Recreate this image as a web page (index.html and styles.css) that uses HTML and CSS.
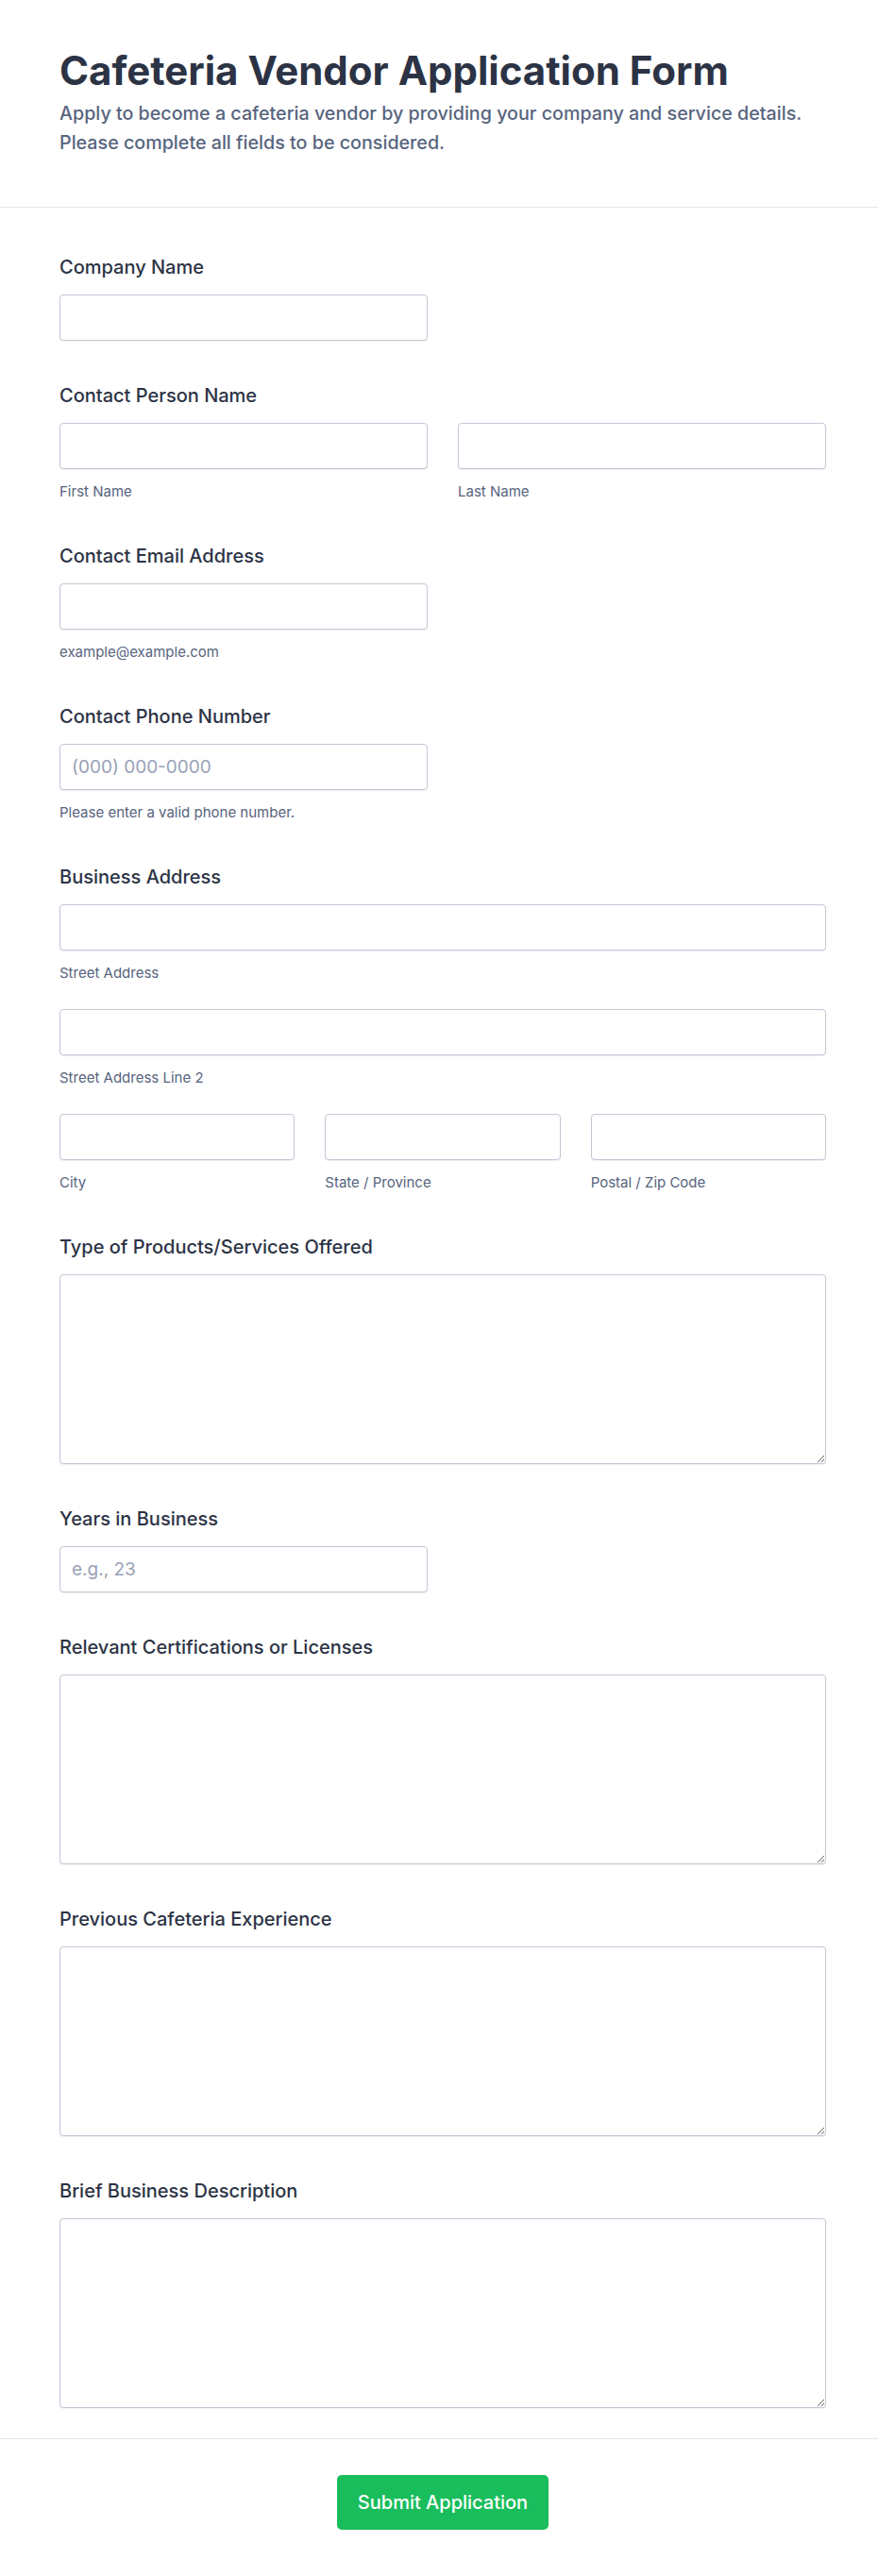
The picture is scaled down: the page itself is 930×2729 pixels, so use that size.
FILE: index.html
```html
<!DOCTYPE html>
<html lang="en">
<head>
<meta charset="utf-8">
<title>Cafeteria Vendor Application Form</title>
<link rel="stylesheet" href="styles.css">
</head>
<body>
<header class="form-header">
  <h1 class="form-title">Cafeteria Vendor Application Form</h1>
  <p class="form-subtitle">Apply to become a cafeteria vendor by providing your company and service details. Please complete all fields to be considered.</p>
</header>

<main class="form-body">
  <div class="field">
    <label class="field-label">Company Name</label>
    <input class="input input-half" type="text">
  </div>

  <div class="field">
    <label class="field-label">Contact Person Name</label>
    <div class="grid-2">
      <div class="sub-field">
        <input class="input" type="text">
        <span class="sublabel">First Name</span>
      </div>
      <div class="sub-field">
        <input class="input" type="text">
        <span class="sublabel">Last Name</span>
      </div>
    </div>
  </div>

  <div class="field">
    <label class="field-label">Contact Email Address</label>
    <input class="input input-half" type="email">
    <span class="sublabel">example@example.com</span>
  </div>

  <div class="field">
    <label class="field-label">Contact Phone Number</label>
    <input class="input input-half" type="tel" placeholder="(000) 000-0000">
    <span class="sublabel">Please enter a valid phone number.</span>
  </div>

  <div class="field">
    <label class="field-label">Business Address</label>
    <div class="address">
      <div class="sub-field">
        <input class="input" type="text">
        <span class="sublabel">Street Address</span>
      </div>
      <div class="sub-field">
        <input class="input" type="text">
        <span class="sublabel">Street Address Line 2</span>
      </div>
      <div class="grid-3">
        <div class="sub-field">
          <input class="input" type="text">
          <span class="sublabel">City</span>
        </div>
        <div class="sub-field">
          <input class="input" type="text">
          <span class="sublabel">State / Province</span>
        </div>
        <div class="sub-field">
          <input class="input" type="text">
          <span class="sublabel">Postal / Zip Code</span>
        </div>
      </div>
    </div>
  </div>

  <div class="field">
    <label class="field-label">Type of Products/Services Offered</label>
    <textarea class="input textarea"></textarea>
  </div>

  <div class="field">
    <label class="field-label">Years in Business</label>
    <input class="input input-half" type="text" placeholder="e.g., 23">
  </div>

  <div class="field">
    <label class="field-label">Relevant Certifications or Licenses</label>
    <textarea class="input textarea"></textarea>
  </div>

  <div class="field">
    <label class="field-label">Previous Cafeteria Experience</label>
    <textarea class="input textarea"></textarea>
  </div>

  <div class="field">
    <label class="field-label">Brief Business Description</label>
    <textarea class="input textarea"></textarea>
  </div>
</main>

<footer class="form-footer">
  <button class="submit-btn" type="button">Submit Application</button>
</footer>
</body>
</html>
```

FILE: styles.css
```css
* {
  box-sizing: border-box;
}

body {
  margin: 0;
  background: #ffffff;
  color: #2c3345;
  font-family: Inter, "Noto Sans", "Liberation Sans", sans-serif;
}

.form-header {
  padding: 51px 55px 52px 63px;
  border-bottom: 1px solid #e3e6ee;
}

.form-title {
  margin: 0;
  font-size: 42px;
  line-height: 48px;
  font-weight: 700;
  color: #2c3345;
}

.form-subtitle {
  margin: 6px 0 0;
  font-size: 19.7px;
  line-height: 31px;
  font-weight: 500;
  color: #57647e;
}

.form-body {
  padding: 51px 55px 30px 63px;
}

.field {
  margin-bottom: 46px;
}

.field:last-child {
  margin-bottom: 0;
}

.field-label {
  display: block;
  font-size: 20px;
  line-height: 24px;
  font-weight: 500;
  color: #2c3345;
  margin-bottom: 17px;
}

.input {
  display: block;
  width: 100%;
  height: 49px;
  margin: 0;
  padding: 0 12px;
  border: 1px solid #c3c8d6;
  border-radius: 4px;
  background: #ffffff;
  box-shadow: 0 1px 1px rgba(44, 51, 69, 0.08);
  font-family: inherit;
  font-size: 19px;
  color: #2c3345;
}

.input::placeholder {
  color: #97a1b6;
}

.input-half {
  width: calc(50% - 16px);
}

.textarea {
  height: 201px;
  padding: 12px;
  resize: vertical;
  margin-bottom: 2px;
}

.sublabel {
  display: block;
  margin-top: 14px;
  font-size: 15px;
  line-height: 20px;
  color: #57647e;
}

.grid-2 {
  display: grid;
  grid-template-columns: 1fr 1fr;
  column-gap: 32px;
}

.grid-3 {
  display: grid;
  grid-template-columns: 1fr 1fr 1fr;
  column-gap: 32px;
}

.address {
  display: flex;
  flex-direction: column;
  gap: 28px;
}

.form-footer {
  border-top: 1px solid #e3e6ee;
  padding: 38px 55px 48px 63px;
  display: flex;
  justify-content: center;
}

.submit-btn {
  background: #19bd5c;
  color: #ffffff;
  font-family: inherit;
  font-size: 20px;
  line-height: 24px;
  font-weight: 500;
  padding: 17px 22px;
  border: none;
  border-radius: 5px;
  cursor: pointer;
}
```
